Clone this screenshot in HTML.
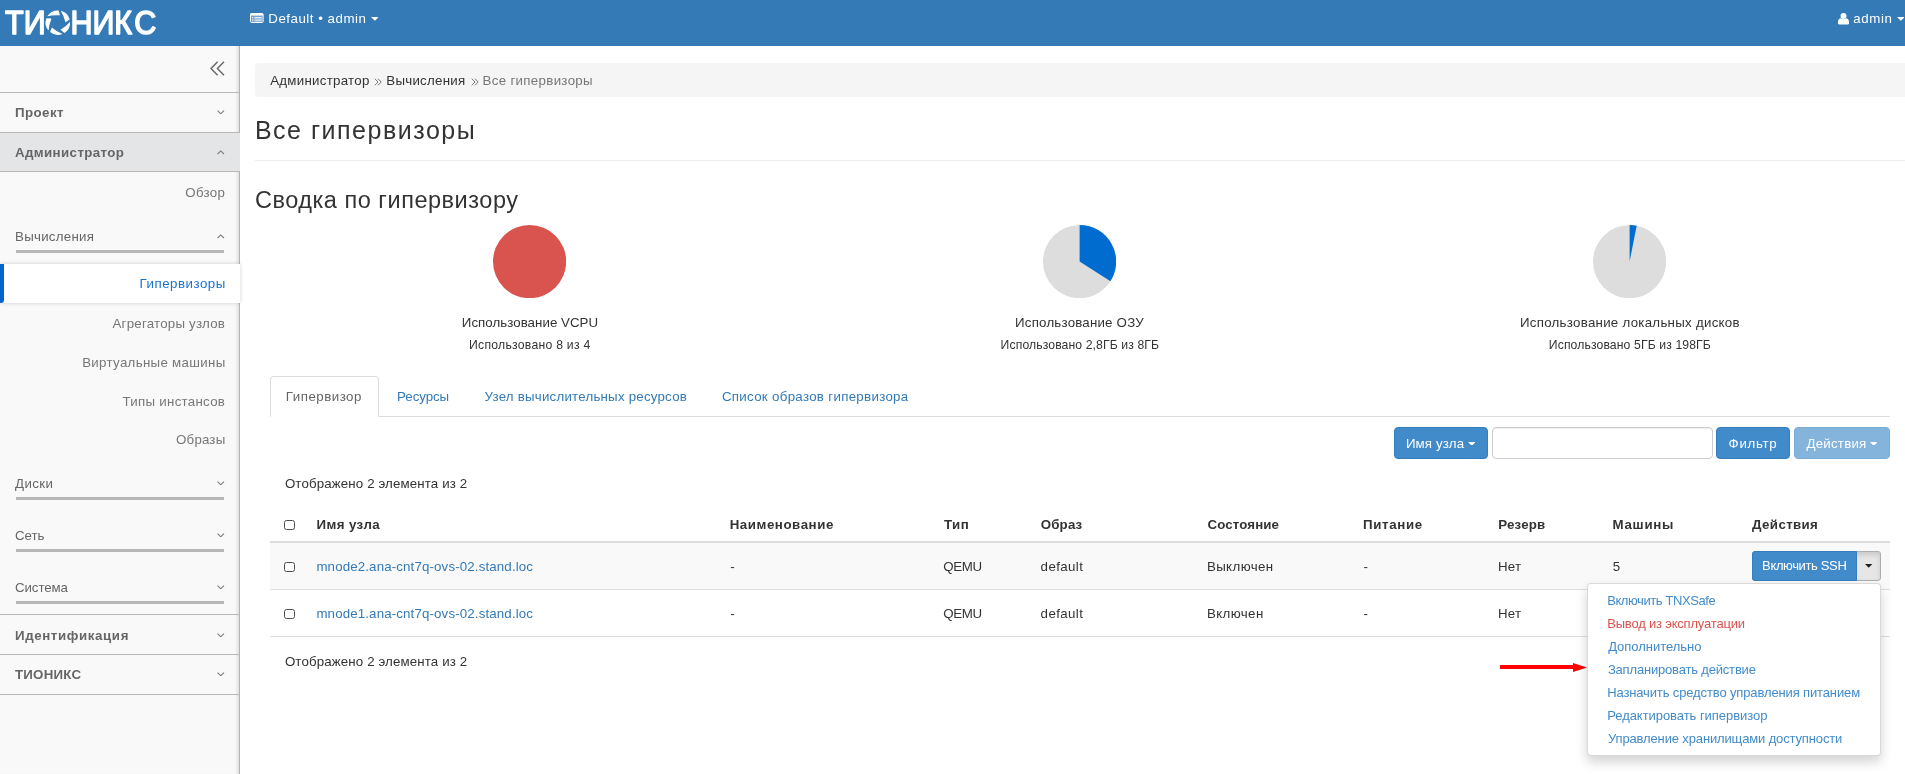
<!DOCTYPE html>
<html lang="ru"><head><meta charset="utf-8"><title>Все гипервизоры</title>
<style>
html,body{margin:0;padding:0}
body{width:1905px;height:774px;overflow:hidden;position:relative;background:#fff;font-family:'Liberation Sans', sans-serif;font-size:13px;color:#333}
#w{position:absolute;left:0;top:0;width:1905px;height:774px;overflow:hidden;will-change:transform}
.a{position:absolute;display:block}
.t{position:absolute;white-space:pre;line-height:40px}
.cb{position:absolute;width:9px;height:8.4px;border:1.2px solid #4d4d4d;border-radius:2.5px;background:#fff}
#hdr{position:absolute;left:0;top:0;width:1905px;height:46px;background:#337ab7}
#side{position:absolute;left:0;top:46px;width:239px;height:728px;background:#f9f9f9;border-right:1px solid #b4b4b4;box-shadow:inset -4px 0 3px -2px rgba(0,0,0,.10)}
.ln{position:absolute;left:0;width:240px;height:1px;background:#b8b8b8}
.ul{position:absolute;left:16px;width:208px;height:3px;background:#b7b7b7}
.btn{position:absolute;box-sizing:border-box;border-radius:4px;background:#428bca;border:1px solid #357ebd}
</style></head><body>
<div id="w">
<div id="hdr"></div>
<svg class="a" style="left:0;top:0" width="170" height="46" viewBox="0 0 170 46"><g transform="scale(0.9,1)"><text x="5.6 26.3 49.5 78.3 102.9 127 149.1" y="34.2" font-family="Liberation Sans, sans-serif" font-size="33.9" fill="#fff" stroke="#fff" stroke-width="1.6" stroke-linejoin="round">ТИОНИКС</text></g><circle cx="57.85" cy="22.65" r="13.8" fill="#337ab7"/><path transform="translate(57.85 22.65)" d="M2.86 -11.91A12.25 12.25 0 0 1 11.86 -3.07L7.59 -0.33Q6.01 -7.03 2.86 -11.91ZM12.21 -0.96A12.25 12.25 0 0 1 6.58 10.33L2.66 7.12Q8.55 3.54 12.21 -0.96ZM4.69 11.32A12.25 12.25 0 0 1 -7.79 9.45L-5.95 4.73Q-0.72 9.22 4.69 11.32ZM-9.31 7.96A12.25 12.25 0 0 1 -11.40 -4.49L-6.34 -4.19Q-8.99 2.16 -9.31 7.96ZM-10.44 -6.40A12.25 12.25 0 0 1 0.75 -12.23L2.03 -7.32Q-4.83 -7.89 -10.44 -6.40Z" fill="#fff"/></svg>
<svg class="a" style="left:250px;top:13px" width="14" height="10" viewBox="0 0 14 10"><rect x="0.5" y="0.5" width="12.6" height="9" rx="1" fill="rgba(255,255,255,.25)" stroke="#fff" stroke-width="1"/><path d="M0.5 0.5H13.1V2.6H0.5Z" fill="#fff"/><path d="M2 4.4h1.4M2 6.1h1.4M2 7.8h1.4M4.4 4.4h7.4M4.4 6.1h7.4M4.4 7.8h7.4" stroke="#fff" stroke-width="0.9"/></svg>
<svg class="a" style="left:1838px;top:12.7px" width="11" height="12" viewBox="0 0 11 12"><circle cx="5.5" cy="3" r="3" fill="#fff"/><path d="M0 10.2V8.8C0 6.6 1.5 5.5 2.9 5.3C3.7 6 4.6 6.3 5.5 6.3C6.4 6.3 7.3 6 8.1 5.3C9.5 5.5 11 6.6 11 8.8V10.2C11 11 10.5 11.4 9.8 11.4H1.2C0.5 11.4 0 11 0 10.2Z" fill="#fff"/></svg>
<span class="t" style="top:-1px;font-size:13.3px;color:#fff;letter-spacing:0.51px;left:268.3px;">Default • admin</span><svg class="a" style="left:370.7px;top:17px" width="7.6" height="3.9" viewBox="0 0 8 4"><path d="M0 0H8L4 4Z" fill="#fff"/></svg><span class="t" style="top:-1px;font-size:13.3px;color:#fff;letter-spacing:0.62px;left:1853.3px;">admin</span><svg class="a" style="left:1896.6px;top:17px" width="7.6" height="3.9" viewBox="0 0 8 4"><path d="M0 0H8L4 4Z" fill="#fff"/></svg>
<div id="side"></div>
<svg class="a" style="left:209.5px;top:61px" width="15" height="15" viewBox="0 0 15 15"><path d="M7.6 0.7L1 7.5L7.6 14.3M14 0.7L7.4 7.5L14 14.3" fill="none" stroke="#666" stroke-width="1.4"/></svg>
<div class="ln" style="top:92px"></div>
<div class="ln" style="top:132px"></div>
<div class="a" style="left:0;top:133px;width:240px;height:38px;background:#e4e5e7"></div>
<div class="ln" style="top:171px"></div>
<div class="ul" style="top:250px"></div>
<div class="a" style="left:0;top:264px;width:240px;height:39px;background:#fff;box-shadow:0 0 4px rgba(0,0,0,.18)"></div>
<div class="a" style="left:0;top:264px;width:4px;height:39px;background:#0066cc;border-radius:0 0 3px 0"></div>
<div class="ul" style="top:497px"></div>
<div class="ul" style="top:549px"></div>
<div class="ul" style="top:601px"></div>
<div class="ln" style="top:614px"></div>
<div class="ln" style="top:654px"></div>
<div class="ln" style="top:694px"></div>
<span class="t" style="top:93px;font-size:13.3px;color:#666;font-weight:700;letter-spacing:0.42px;left:15.0px;">Проект</span><svg class="a" style="left:217px;top:109.5px" width="7.6" height="4.6" viewBox="0 0 7.6 4.6"><path d="M0.6 0.6 L3.8 3.8 L7 0.6" fill="none" stroke="#7a7a7a" stroke-width="1.1"/></svg><span class="t" style="top:133px;font-size:13.3px;color:#666;font-weight:700;letter-spacing:0.39px;left:15.0px;">Администратор</span><svg class="a" style="left:217px;top:150px" width="7.6" height="4.6" viewBox="0 0 7.6 4.6"><path d="M0.6 4 L3.8 0.9 L7 4" fill="none" stroke="#7a7a7a" stroke-width="1.1"/></svg><span class="t" style="top:173px;font-size:13.3px;color:#777;letter-spacing:0.3px;left:185.3px;">Обзор</span><span class="t" style="top:217px;font-size:13.3px;color:#666;letter-spacing:0.26px;left:15.0px;">Вычисления</span><svg class="a" style="left:217px;top:234.3px" width="7.6" height="4.6" viewBox="0 0 7.6 4.6"><path d="M0.6 4 L3.8 0.9 L7 4" fill="none" stroke="#7a7a7a" stroke-width="1.1"/></svg><span class="t" style="top:264px;font-size:13.3px;color:#1a73d0;letter-spacing:0.5px;left:139.6px;">Гипервизоры</span><span class="t" style="top:304px;font-size:13.3px;color:#777;letter-spacing:0.22px;left:112.5px;">Агрегаторы узлов</span><span class="t" style="top:343px;font-size:13.3px;color:#777;letter-spacing:0.31px;left:82.2px;">Виртуальные машины</span><span class="t" style="top:382px;font-size:13.3px;color:#777;letter-spacing:0.28px;left:122.5px;">Типы инстансов</span><span class="t" style="top:420px;font-size:13.3px;color:#777;letter-spacing:0.17px;left:176.1px;">Образы</span><span class="t" style="top:464px;font-size:13.3px;color:#666;letter-spacing:0.41px;left:15.0px;">Диски</span><svg class="a" style="left:217px;top:480.6px" width="7.6" height="4.6" viewBox="0 0 7.6 4.6"><path d="M0.6 0.6 L3.8 3.8 L7 0.6" fill="none" stroke="#7a7a7a" stroke-width="1.1"/></svg><span class="t" style="top:516px;font-size:13.3px;color:#666;letter-spacing:-0.07px;left:15.0px;">Сеть</span><svg class="a" style="left:217px;top:532.8px" width="7.6" height="4.6" viewBox="0 0 7.6 4.6"><path d="M0.6 0.6 L3.8 3.8 L7 0.6" fill="none" stroke="#7a7a7a" stroke-width="1.1"/></svg><span class="t" style="top:568px;font-size:13.3px;color:#666;letter-spacing:-0.1px;left:15.0px;">Система</span><svg class="a" style="left:217px;top:584.6px" width="7.6" height="4.6" viewBox="0 0 7.6 4.6"><path d="M0.6 0.6 L3.8 3.8 L7 0.6" fill="none" stroke="#7a7a7a" stroke-width="1.1"/></svg><span class="t" style="top:616px;font-size:13.3px;color:#666;font-weight:700;letter-spacing:0.61px;left:15.0px;">Идентификация</span><svg class="a" style="left:217px;top:632.7px" width="7.6" height="4.6" viewBox="0 0 7.6 4.6"><path d="M0.6 0.6 L3.8 3.8 L7 0.6" fill="none" stroke="#7a7a7a" stroke-width="1.1"/></svg><span class="t" style="top:655px;font-size:13.3px;color:#666;font-weight:700;letter-spacing:0.22px;left:15.0px;">ТИОНИКС</span><svg class="a" style="left:217px;top:671.8px" width="7.6" height="4.6" viewBox="0 0 7.6 4.6"><path d="M0.6 0.6 L3.8 3.8 L7 0.6" fill="none" stroke="#7a7a7a" stroke-width="1.1"/></svg>
<div class="a" style="left:255px;top:63px;width:1654px;height:34px;background:#f5f5f5;border-radius:4px"></div>
<div class="a" style="left:255px;top:160px;width:1650px;height:1px;background:#eee"></div>
<div class="a" style="left:270px;top:416px;width:1620px;height:1px;background:#ddd"></div>
<div class="a" style="left:270px;top:376px;width:109px;height:41px;box-sizing:border-box;border:1px solid #ddd;border-bottom-color:#fff;border-radius:4px 4px 0 0;background:#fff"></div>
<div class="btn" style="left:1394px;top:427px;width:94px;height:32px"></div>
<div class="a" style="left:1492px;top:427px;width:221px;height:32px;box-sizing:border-box;border:1px solid #ccc;border-radius:4px;background:#fff;box-shadow:inset 0 1px 1px rgba(0,0,0,.075)"></div>
<div class="btn" style="left:1716px;top:427px;width:74px;height:32px"></div>
<div class="btn" style="left:1794px;top:427px;width:96px;height:32px;background:#84b4dc;border-color:#7aaeda"></div>
<div class="a" style="left:270px;top:541px;width:1620px;height:2px;background:#ddd"></div>
<div class="a" style="left:270px;top:543px;width:1620px;height:46px;background:#f9f9f9"></div>
<div class="a" style="left:270px;top:589px;width:1620px;height:1px;background:#ddd"></div>
<div class="a" style="left:270px;top:636px;width:1620px;height:1px;background:#ddd"></div>
<div class="a" style="left:1752px;top:598px;width:129px;height:30px;box-sizing:border-box;border:1px solid #adadad;border-radius:3px;background:#e6e6e6"></div>
<div class="a" style="left:1752px;top:551px;width:129px;height:30px;box-sizing:border-box;border:1px solid #adadad;border-radius:3px;background:#e6e6e6;box-shadow:inset 0 3px 5px rgba(0,0,0,.125)"></div>
<div class="a" style="left:1752px;top:551px;width:105px;height:30px;box-sizing:border-box;border:1px solid #357ebd;border-radius:3px 0 0 3px;background:#428bca"></div>
<span class="t" style="top:61px;font-size:13.3px;color:#333;letter-spacing:0.27px;left:270.2px;">Администратор</span><svg class="a" style="left:373.8px;top:77.7px" width="8" height="8" viewBox="0 0 8 8"><path d="M0.8 0.7L4 4L0.8 7.3M4 0.7L7.2 4L4 7.3" fill="none" stroke="#777" stroke-width="1"/></svg><span class="t" style="top:61px;font-size:13.3px;color:#333;letter-spacing:0.26px;left:386.3px;">Вычисления</span><svg class="a" style="left:470.8px;top:77.7px" width="8" height="8" viewBox="0 0 8 8"><path d="M0.8 0.7L4 4L0.8 7.3M4 0.7L7.2 4L4 7.3" fill="none" stroke="#777" stroke-width="1"/></svg><span class="t" style="top:61px;font-size:13.3px;color:#777;letter-spacing:0.31px;left:482.6px;">Все гипервизоры</span><span class="t" style="top:110px;font-size:25px;color:#333;letter-spacing:1.51px;left:254.9px;">Все гипервизоры</span><span class="t" style="top:180px;font-size:23.5px;color:#333;letter-spacing:0.53px;left:254.9px;">Сводка по гипервизору</span><svg class="a" style="left:493.0px;top:224.79999999999998px" width="73.2" height="73.2" viewBox="-36.6 -36.6 73.2 73.2"><circle r="36.6" fill="#d9534f"/></svg><svg class="a" style="left:1043.0px;top:224.79999999999998px" width="73.2" height="73.2" viewBox="-36.6 -36.6 73.2 73.2"><circle r="36.6" fill="#dddddd"/><path d="M0 0L0 -36.6A36.6 36.6 0 0 1 30.90 19.61Z" fill="#006ccf"/></svg><svg class="a" style="left:1593.0px;top:224.79999999999998px" width="73.2" height="73.2" viewBox="-36.6 -36.6 73.2 73.2"><circle r="36.6" fill="#dddddd"/><path d="M0 0L0 -36.6A36.6 36.6 0 0 1 7.08 -35.91Z" fill="#006ccf"/></svg><span class="t" style="top:303px;font-size:13.3px;color:#333;letter-spacing:0.04px;left:461.8px;">Использование VCPU</span><span class="t" style="top:325px;font-size:12.2px;color:#333;letter-spacing:0.26px;left:469.1px;">Использовано 8 из 4</span><span class="t" style="top:303px;font-size:13.3px;color:#333;letter-spacing:0.2px;left:1015.1px;">Использование ОЗУ</span><span class="t" style="top:325px;font-size:12.2px;color:#333;letter-spacing:0.11px;left:1000.6px;">Использовано 2,8ГБ из 8ГБ</span><span class="t" style="top:303px;font-size:13.3px;color:#333;letter-spacing:0.27px;left:1520.0px;">Использование локальных дисков</span><span class="t" style="top:325px;font-size:12.2px;color:#333;letter-spacing:0.12px;left:1548.8px;">Использовано 5ГБ из 198ГБ</span><span class="t" style="top:377px;font-size:13.3px;color:#666;letter-spacing:0.5px;left:285.8px;">Гипервизор</span><span class="t" style="top:377px;font-size:13.3px;color:#337ab7;letter-spacing:-0.06px;left:397.1px;">Ресурсы</span><span class="t" style="top:377px;font-size:13.3px;color:#337ab7;letter-spacing:0.22px;left:484.6px;">Узел вычислительных ресурсов</span><span class="t" style="top:377px;font-size:13.3px;color:#337ab7;letter-spacing:0.31px;left:721.9px;">Список образов гипервизора</span><span class="t" style="top:424px;font-size:13.3px;color:#fff;letter-spacing:0.12px;left:1405.9px;">Имя узла</span><svg class="a" style="left:1467.6px;top:441.5px" width="7.6" height="3.9" viewBox="0 0 8 4"><path d="M0 0H8L4 4Z" fill="#fff"/></svg><span class="t" style="top:424px;font-size:13.3px;color:#fff;letter-spacing:0.68px;left:1728.6px;">Фильтр</span><span class="t" style="top:424px;font-size:13.3px;color:#fff;letter-spacing:0.22px;left:1806.5px;">Действия</span><svg class="a" style="left:1869.7px;top:441.5px" width="7.6" height="3.9" viewBox="0 0 8 4"><path d="M0 0H8L4 4Z" fill="#fff"/></svg><span class="t" style="top:464px;font-size:13.3px;color:#333;letter-spacing:0.13px;left:284.9px;">Отображено 2 элемента из 2</span><span class="t" style="top:505px;font-size:13.3px;color:#333;font-weight:700;letter-spacing:0.41px;left:316.5px;">Имя узла</span><span class="t" style="top:505px;font-size:13.3px;color:#333;font-weight:700;letter-spacing:0.55px;left:729.7px;">Наименование</span><span class="t" style="top:505px;font-size:13.3px;color:#333;font-weight:700;letter-spacing:0.52px;left:943.9px;">Тип</span><span class="t" style="top:505px;font-size:13.3px;color:#333;font-weight:700;letter-spacing:0.17px;left:1040.7px;">Образ</span><span class="t" style="top:505px;font-size:13.3px;color:#333;font-weight:700;letter-spacing:0.11px;left:1207.5px;">Состояние</span><span class="t" style="top:505px;font-size:13.3px;color:#333;font-weight:700;letter-spacing:0.64px;left:1363.1px;">Питание</span><span class="t" style="top:505px;font-size:13.3px;color:#333;font-weight:700;letter-spacing:0.18px;left:1498.3px;">Резерв</span><span class="t" style="top:505px;font-size:13.3px;color:#333;font-weight:700;letter-spacing:0.74px;left:1612.5px;">Машины</span><span class="t" style="top:505px;font-size:13.3px;color:#333;font-weight:700;letter-spacing:0.36px;left:1752.1px;">Действия</span><span class="t" style="top:547px;font-size:13.3px;color:#337ab7;letter-spacing:0.14px;left:316.4px;">mnode2.ana-cnt7q-ovs-02.stand.loc</span><span class="t" style="top:547px;font-size:13.3px;color:#333;letter-spacing:-0.25px;left:730.2px;">-</span><span class="t" style="top:547px;font-size:13.3px;color:#333;letter-spacing:-0.35px;left:943.3px;">QEMU</span><span class="t" style="top:547px;font-size:13.3px;color:#333;letter-spacing:0.4px;left:1040.6px;">default</span><span class="t" style="top:547px;font-size:13.3px;color:#333;letter-spacing:0.4px;left:1206.9px;">Выключен</span><span class="t" style="top:547px;font-size:13.3px;color:#333;letter-spacing:-0.25px;left:1363.6px;">-</span><span class="t" style="top:547px;font-size:13.3px;color:#333;letter-spacing:0.12px;left:1498.1px;">Нет</span><span class="t" style="top:547px;font-size:13.3px;color:#333;letter-spacing:0.03px;left:1612.8px;">5</span><span class="t" style="top:594px;font-size:13.3px;color:#337ab7;letter-spacing:0.14px;left:316.4px;">mnode1.ana-cnt7q-ovs-02.stand.loc</span><span class="t" style="top:594px;font-size:13.3px;color:#333;letter-spacing:-0.25px;left:730.2px;">-</span><span class="t" style="top:594px;font-size:13.3px;color:#333;letter-spacing:-0.35px;left:943.3px;">QEMU</span><span class="t" style="top:594px;font-size:13.3px;color:#333;letter-spacing:0.4px;left:1040.6px;">default</span><span class="t" style="top:594px;font-size:13.3px;color:#333;letter-spacing:0.4px;left:1206.9px;">Включен</span><span class="t" style="top:594px;font-size:13.3px;color:#333;letter-spacing:-0.25px;left:1363.6px;">-</span><span class="t" style="top:594px;font-size:13.3px;color:#333;letter-spacing:0.12px;left:1498.1px;">Нет</span><span class="t" style="top:642px;font-size:13.3px;color:#333;letter-spacing:0.13px;left:284.9px;">Отображено 2 элемента из 2</span><div class="cb" style="left:284px;top:519.5px"></div><div class="cb" style="left:284px;top:561.5px"></div><div class="cb" style="left:284px;top:608.5px"></div><span class="t" style="top:546px;font-size:13px;color:#fff;letter-spacing:-0.36px;left:1762.1px;">Включить SSH</span><svg class="a" style="left:1865.2px;top:564.3px" width="7.4" height="3.8" viewBox="0 0 8 4"><path d="M0 0H8L4 4Z" fill="#222"/></svg>
<div class="a" style="left:1500px;top:665px;width:75px;height:4px;background:#f00"></div>
<svg class="a" style="left:1572.5px;top:662.5px" width="14" height="9" viewBox="0 0 14 9"><path d="M0 0L14 4.5L0 9Z" fill="#f00"/></svg>
<div class="a" style="left:1587px;top:583px;width:294px;height:173px;box-sizing:border-box;border:1px solid rgba(0,0,0,.15);border-radius:4px;background:#fff;box-shadow:0 6px 12px rgba(0,0,0,.175)"></div>
<span class="t" style="top:581px;font-size:13px;color:#428bca;letter-spacing:-0.41px;left:1607.2px;">Включить TNXSafe</span><span class="t" style="top:604px;font-size:13px;color:#d9534f;letter-spacing:-0.19px;left:1607.2px;">Вывод из эксплуатации</span><span class="t" style="top:627px;font-size:13px;color:#428bca;letter-spacing:-0.02px;left:1608.2px;">Дополнительно</span><span class="t" style="top:650px;font-size:13px;color:#428bca;letter-spacing:-0.18px;left:1607.9px;">Запланировать действие</span><span class="t" style="top:673px;font-size:13px;color:#428bca;letter-spacing:-0.13px;left:1607.2px;">Назначить средство управления питанием</span><span class="t" style="top:696px;font-size:13px;color:#428bca;letter-spacing:-0.05px;left:1607.2px;">Редактировать гипервизор</span><span class="t" style="top:719px;font-size:13px;color:#428bca;letter-spacing:-0.14px;left:1608.0px;">Управление хранилищами доступности</span>
</div>
</body></html>
